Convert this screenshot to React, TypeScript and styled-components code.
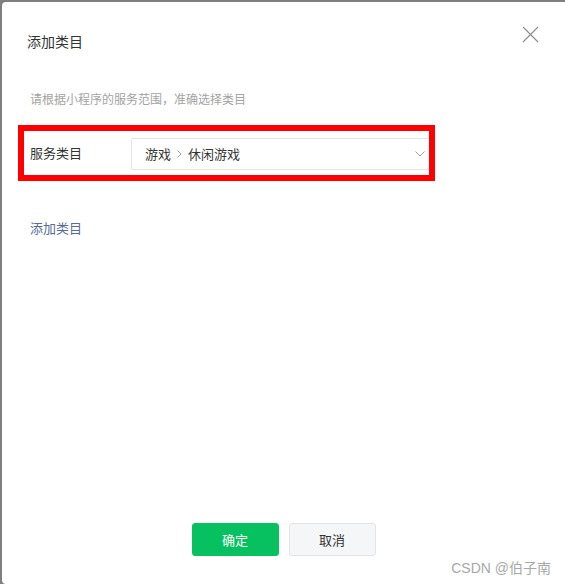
import React from "react";
import styled, { createGlobalStyle } from "styled-components";

const GlobalStyle = createGlobalStyle`
  html, body {
    margin: 0;
    padding: 0;
    background: #7f7f7f;
    height: 100%;
    overflow: hidden;
  }
  body {
    font-family: "Liberation Sans", "Noto Sans CJK SC", sans-serif;
  }
  * { box-sizing: border-box; }
`;

const Dialog = styled.div`
  position: relative;
  margin: 2px 0 0 2px;
  height: 582px;
  background: #ffffff;
  border-radius: 4px 0 0 4px;
  display: flex;
  flex-direction: column;
`;

const Header = styled.div`
  display: flex;
  justify-content: space-between;
  align-items: flex-start;
  padding: 24px 26px 0 25px;
`;

const Title = styled.h2`
  margin: 5px 0 0;
  font-size: 14px;
  line-height: 20px;
  font-weight: normal;
  color: #333333;
  font-family: "Noto Sans CJK SC", sans-serif;
`;

const CloseButton = styled.button`
  width: 17px;
  height: 17px;
  padding: 0;
  border: none;
  background: none;
  display: flex;
  cursor: pointer;
`;

const Subtitle = styled.p`
  margin: 39px 0 0 28px;
  font-size: 12px;
  line-height: 18px;
  color: #a3a3a3;
  font-family: "Noto Sans CJK SC", sans-serif;
`;

const Highlight = styled.div`
  margin: 17px 0 0 16px;
  width: 417px;
  border: 6px solid #ff0000;
  overflow: hidden;
`;

const FormRow = styled.div`
  display: flex;
  align-items: center;
  height: 44px;
  padding: 2px 0 0 6px;
`;

const Label = styled.span`
  flex: 0 0 101px;
  margin-bottom: 2px;
  font-size: 13px;
  line-height: 20px;
  color: #333333;
  font-family: "Noto Sans CJK SC", sans-serif;
`;

const Select = styled.div`
  flex: 0 0 310px;
  height: 32px;
  border: 1px solid #e5e5e5;
  border-radius: 2px;
  display: flex;
  align-items: center;
  justify-content: space-between;
  padding: 0 15px 0 13px;
  font-size: 13px;
  color: #353535;
  font-family: "Noto Sans CJK SC", sans-serif;
`;

const Path = styled.span`
  display: flex;
  align-items: center;
  gap: 6px;
  line-height: 20px;
`;

const Link = styled.a`
  margin: 37px 0 0 28px;
  align-self: flex-start;
  font-size: 13px;
  line-height: 20px;
  color: #576b95;
  text-decoration: none;
  font-family: "Noto Sans CJK SC", sans-serif;
  cursor: pointer;
`;

const Footer = styled.div`
  margin-top: auto;
  display: flex;
  justify-content: center;
  gap: 10px;
  padding-bottom: 28px;
`;

const Button = styled.button<{ $primary?: boolean }>`
  width: 87px;
  height: 33px;
  border-radius: 3px;
  font-size: 13px;
  font-family: "Noto Sans CJK SC", sans-serif;
  cursor: pointer;
  border: 1px solid ${(p) => (p.$primary ? "#07c160" : "#e3e4e6")};
  background: ${(p) => (p.$primary ? "#07c160" : "#f5f6f7")};
  color: ${(p) => (p.$primary ? "#ffffff" : "#333333")};
`;

const Watermark = styled.span`
  position: absolute;
  right: 14px;
  bottom: 6px;
  font-size: 14px;
  line-height: 20px;
  color: #a8a8a8;
  font-family: "Liberation Sans", "Noto Sans CJK SC", sans-serif;
`;

export default function App() {
  return (
    <>
      <GlobalStyle />
      <Dialog>
        <Header>
          <Title>添加类目</Title>
          <CloseButton aria-label="关闭">
            <svg width="17" height="17" viewBox="0 0 17 17">
              <path d="M1 1 L16 16 M16 1 L1 16" stroke="#8a8a8a" strokeWidth="1.1" fill="none" />
            </svg>
          </CloseButton>
        </Header>
        <Subtitle>请根据小程序的服务范围，准确选择类目</Subtitle>
        <Highlight>
          <FormRow>
            <Label>服务类目</Label>
            <Select>
              <Path>
                游戏
                <svg width="5" height="8" viewBox="0 0 5 8">
                  <path d="M0.5 0.5 L4 4 L0.5 7.5" stroke="#a0a0a0" strokeWidth="1" fill="none" />
                </svg>
                休闲游戏
              </Path>
              <svg width="10" height="6" viewBox="0 0 10 6">
                <path d="M0.5 0.5 L5 5 L9.5 0.5" stroke="#9a9a9a" strokeWidth="1" fill="none" />
              </svg>
            </Select>
          </FormRow>
        </Highlight>
        <Link>添加类目</Link>
        <Footer>
          <Button $primary>确定</Button>
          <Button>取消</Button>
        </Footer>
        <Watermark>CSDN @伯子南</Watermark>
      </Dialog>
    </>
  );
}
